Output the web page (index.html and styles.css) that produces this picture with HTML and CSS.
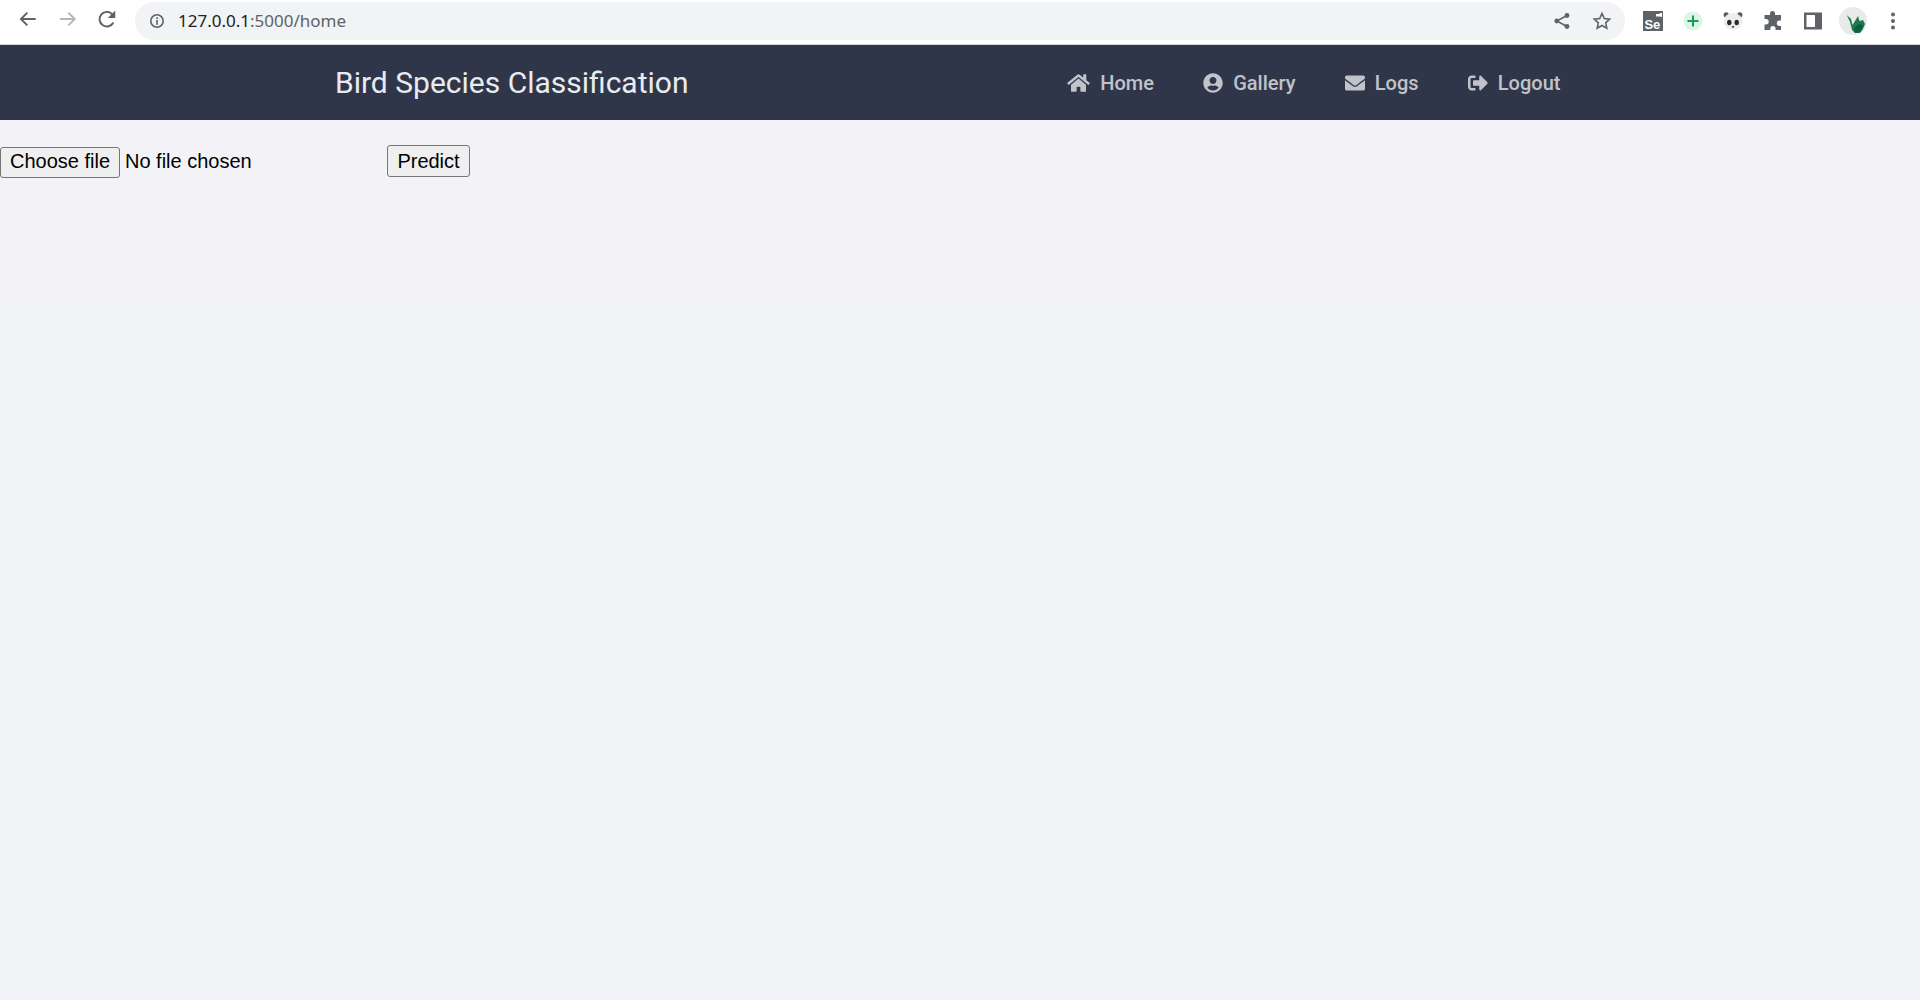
FILE: index.html
```html
<!DOCTYPE html>
<html lang="en">
<head>
<meta charset="utf-8">
<title>Bird Species Classification</title>
<link rel="stylesheet" href="styles.css">
</head>
<body>
<div class="chrome">
  <div class="chrome-nav">
    <svg class="ci" viewBox="0 0 24 24"><path class="st dark" d="M20 12H5M11.500 5.500L5 12l6.500 6.500"/></svg>
    <svg class="ci" viewBox="0 0 24 24"><path class="st light" d="M4 12h15M12.500 5.500L19 12l-6.500 6.500"/></svg>
    <svg class="ci" viewBox="0 0 24 24"><path class="st dark" d="M18.600 15.500A7.400 7.400 0 1 1 17.300 7L19 8.800"/><path class="fl" d="M20.500 3.500v7.500H13z"/></svg>
  </div>
  <div class="omnibox">
    <svg class="info" viewBox="0 0 16 16"><circle class="st thin" cx="8" cy="8" r="6.200"/><path class="fl" d="M7.200 7h1.600v4.700H7.200zM7.200 4.300h1.600v1.600H7.200z"/></svg>
    <span class="url"><span class="host">127.0.0.1</span>:5000/home</span>
    <span class="omni-actions">
      <svg class="ai" viewBox="0 0 20 20"><circle class="fl" cx="15" cy="4.500" r="2.400"/><circle class="fl" cx="4.800" cy="10" r="2.400"/><circle class="fl" cx="15" cy="15.500" r="2.400"/><path class="st thin" d="M15 4.500L4.800 10 15 15.500"/></svg>
      <svg class="ai" viewBox="0 0 20 20"><path class="st thin" d="M10 2.500l2.300 5 5.400.6-4 3.700 1.100 5.400L10 14.500l-4.800 2.700 1.100-5.400-4-3.700 5.400-.6z"/></svg>
    </span>
  </div>
  <div class="extensions">
    <svg class="ei" viewBox="0 0 22 22"><rect class="fl" x="1" y="1" width="20" height="20"/><path class="wh" d="M14 4h3.500v-.8L20 3v4l-2.500-.4V6.500H14z"/><text class="se" x="2.400" y="18.500">Se</text></svg>
    <svg class="ei" viewBox="0 0 22 22"><circle class="mint" cx="11" cy="11" r="9.500"/><path class="green" d="M10 5.500h2V10h4.500v2H12v4.500h-2V12H5.500v-2H10z"/></svg>
    <svg class="ei" viewBox="0 0 22 22"><circle class="ear" cx="4.200" cy="4.800" r="2.600"/><circle class="ear" cx="17.800" cy="4.800" r="2.600"/><ellipse class="pale" cx="11" cy="11.500" rx="9.500" ry="8.500"/><ellipse class="blk" cx="7.300" cy="12.500" rx="2.200" ry="2.800"/><ellipse class="blk" cx="14.700" cy="12.500" rx="2.200" ry="2.800"/><ellipse class="blk" cx="11" cy="16.800" rx="1.200" ry=".9"/></svg>
    <svg class="ei" viewBox="0 0 22 22"><path class="fl" d="M8 3.500a2.500 2.500 0 0 1 5 0V5h6v5.500h-1.500a2.700 2.700 0 0 0 0 5.400H19V20h-5.500v-1.500a2.600 2.600 0 0 0-5.200 0V20H2.500v-5.500H4a2.700 2.700 0 0 0 0-5.400H2.500V5H8z"/></svg>
    <svg class="ei" viewBox="0 0 22 22"><path class="fl" d="M2 2.500h18v17H2zM4.500 5v12H13V5z"/></svg>
    <svg class="avatar" viewBox="0 0 28 28"><circle class="avbg" cx="14" cy="14" r="14"/><path class="forest" d="M7.700 8L12 12l1.500 6 2.500-4 3-5 1.500 5 3.500-1 2 4-2 5-3 4h-5l-3-3-2-8z"/><path class="teal" d="M15 21l5-4 4 1-2.500 6.500L16 26z"/></svg>
    <svg class="ei" viewBox="0 0 22 22"><circle class="fl" cx="11" cy="4.500" r="2"/><circle class="fl" cx="11" cy="11" r="2"/><circle class="fl" cx="11" cy="17.500" r="2"/></svg>
  </div>
</div>

<header class="navbar">
  <a class="brand">Bird Species Classification</a>
  <nav class="links">
    <a class="link home"><svg class="ni" viewBox="0 0 576 512"><path d="M280.400 148.300L96 300.100V464a16 16 0 0 0 16 16l112.100-.3a16 16 0 0 0 15.900-16V368a16 16 0 0 1 16-16h64a16 16 0 0 1 16 16v95.600a16 16 0 0 0 16 16.100L464 480a16 16 0 0 0 16-16V300L295.700 148.300a12.200 12.200 0 0 0-15.300 0zM571.600 251.500L488 182.600V44.100a12 12 0 0 0-12-12h-56a12 12 0 0 0-12 12v72.600L318.500 43a48 48 0 0 0-61 0L4.300 251.500a12 12 0 0 0-1.600 16.900l25.500 31A12 12 0 0 0 45.200 301l235.200-193.700a12.200 12.200 0 0 1 15.300 0L530.900 301a12 12 0 0 0 16.900-1.600l25.500-31a12 12 0 0 0-1.700-16.900z"/></svg>Home</a>
    <a class="link"><svg class="ni" viewBox="0 0 496 512"><path d="M248 8C111 8 0 119 0 256s111 248 248 248 248-111 248-248S385 8 248 8zm0 96c48.600 0 88 39.400 88 88s-39.400 88-88 88-88-39.400-88-88 39.400-88 88-88zm0 344c-58.700 0-111.300-26.600-146.500-68.200 18.800-35.400 55.600-59.800 98.500-59.800 2.400 0 4.800.4 7.100 1.100 13 4.200 26.600 6.900 40.900 6.900 14.300 0 28-2.700 40.900-6.900 2.300-.7 4.700-1.100 7.100-1.100 42.900 0 79.700 24.400 98.500 59.800C359.300 421.400 306.700 448 248 448z"/></svg>Gallery</a>
    <a class="link"><svg class="ni" viewBox="0 0 512 512"><path d="M502.300 190.800c3.900-3.100 9.700-.2 9.700 4.700V400c0 26.500-21.500 48-48 48H48c-26.500 0-48-21.500-48-48V195.600c0-5 5.700-7.800 9.700-4.700 22.400 17.400 52.100 39.500 154.100 113.600 21.100 15.400 56.700 47.800 92.200 47.600 35.700.3 72-32.800 92.300-47.600 102-74.100 131.600-96.300 154-113.700zM256 320c23.200.4 56.600-29.200 73.400-41.400 132.700-96.300 142.800-104.700 173.400-128.700 5.800-4.500 9.200-11.500 9.200-18.900v-19c0-26.500-21.500-48-48-48H48C21.500 64 0 85.500 0 112v19c0 7.400 3.400 14.300 9.200 18.900 30.600 23.900 40.700 32.400 173.400 128.700 16.800 12.200 50.200 41.800 73.400 41.400z"/></svg>Logs</a>
    <a class="link"><svg class="ni" viewBox="0 0 512 512"><path d="M497 273L329 441c-15 15-41 4.500-41-17v-96H152c-13.300 0-24-10.700-24-24v-96c0-13.300 10.700-24 24-24h136V88c0-21.400 25.900-32 41-17l168 168c9.300 9.400 9.300 24.600 0 34zM192 436v-40c0-6.600-5.400-12-12-12H96c-17.700 0-32-14.300-32-32V160c0-17.700 14.300-32 32-32h84c6.600 0 12-5.400 12-12V76c0-6.600-5.400-12-12-12H96c-53 0-96 43-96 96v192c0 53 43 96 96 96h84c6.600 0 12-5.400 12-12z"/></svg>Logout</a>
  </nav>
</header>

<main class="content">
  <form class="upload">
    <div class="file">
      <button class="btn choose" type="button">Choose file</button>
      <span class="file-name">No file chosen</span>
    </div>
    <button class="btn predict" type="button">Predict</button>
  </form>
</main>
</body>
</html>
```

FILE: styles.css
```css
html, body { margin: 0; padding: 0; }
body { background: #f3f4f8; height: 1000px; overflow: hidden; font-family: "Liberation Sans", sans-serif; }

.chrome { background: #fff; border-bottom: 1px solid #d3d5d9; display: flex; align-items: flex-start; padding-top: 2px; height: 42px; }
.chrome-nav { display: flex; gap: 16px; padding: 5px 0 0 16px; width: 119px; box-sizing: border-box; flex: none; }
.ci { width: 24px; height: 24px; }
.omnibox { width: 1490px; flex: none; margin-left: 16px; height: 38px; background: #f1f3f4; border-radius: 19px; display: flex; align-items: center; box-sizing: border-box; padding-left: 14px; }
.info { width: 16px; height: 16px; margin-right: 13px; }
.url { font: 17px "Noto Sans", sans-serif; color: #5f6368; margin-bottom: 2px; }
.host { color: #202124; }
.omni-actions { margin-left: auto; display: flex; gap: 20px; padding-right: 13px; }
.ai { width: 20px; height: 20px; }
.extensions { display: flex; align-items: center; gap: 18px; padding: 5px 0 0 17px; }
.ei { width: 22px; height: 22px; }
.avatar { width: 28px; height: 28px; margin: 0 -3px; }

.st { fill: none; stroke: #5f6368; stroke-width: 2; }
.st.thin { stroke-width: 1.600; }
.st.dark { stroke: #5f6368; }
.st.light { stroke: #b4b6b9; }
.fl { fill: #5f6368; }
.wh { fill: #fff; }
.se { font: bold 13px "Liberation Sans", sans-serif; fill: #fff; }
.mint { fill: #dff5e3; }
.green { fill: #0f9d58; }
.blk { fill: #2a2a2a; }
.ear { fill: #55585c; }
.pale { fill: #eceded; }
.avbg { fill: #e8eae8; }
.forest { fill: #1f7a4d; }
.teal { fill: #0b5f3c; }

.navbar { height: 75px; background: #303649; display: flex; align-items: center; padding-left: 335px; }
.brand { font: 400 30px Roboto, sans-serif; color: #e9ebef; width: 732px; flex: none; }
.links { display: flex; gap: 49px; }
.link { display: flex; align-items: center; font: 500 20px Roboto, sans-serif; color: #c1c3cb; }
.ni { width: 20px; height: 20px; margin-right: 10.250px; fill: #c1c3cb; }
.home .ni { width: 23px; }

.content { height: 180px; background: #f2f2f7; padding-top: 25px; box-sizing: border-box; }
.upload { display: flex; align-items: flex-start; }
.file { width: 387px; flex: none; display: flex; align-items: center; margin-top: 2px; }
.file-name { font: 20px "Liberation Sans", sans-serif; color: #000; margin: 0 0 2px 5px; }
.btn { font: 20px "Liberation Sans", sans-serif; color: #000; background: #efefef; border: 1px solid #767676; border-radius: 3px; margin: 0; line-height: 23px; white-space: nowrap; }
.choose { padding: 2px 0 4px; width: 120px; }
.predict { padding: 3.500px 0; width: 83px; }
```
